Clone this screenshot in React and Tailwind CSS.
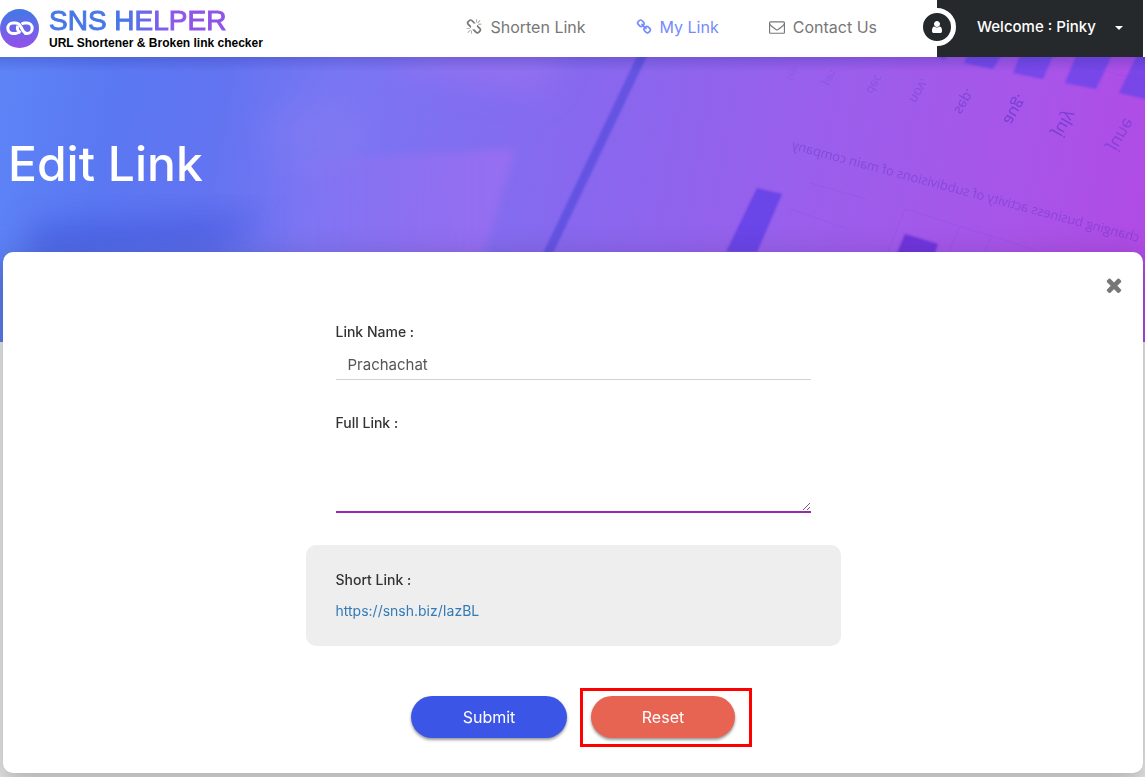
import { useState } from 'react';

const ICONS = {
  broken:
    'M503 1271l-256 256q-10 9-23 9-12 0-23-9-9-10-9-23t9-23l256-256q10-9 23-9t23 9q9 10 9 23t-9 23zm169 41v320q0 14-9 23t-23 9-23-9-9-23v-320q0-14 9-23t23-9 23 9 9 23zm-224-224q0 14-9 23t-23 9h-320q-14 0-23-9t-9-23 9-23 23-9h320q14 0 23 9t9 23zm1264 128q0 120-85 203l-147 146q-83 83-203 83-121 0-204-85l-334-335q-21-21-42-56l239-18 273 274q28 28 68 27.5t68-27.5l147-146q28-28 28-67 0-40-28-68l-274-275 18-239q35 21 56 42l336 336q84 86 84 204zm-617-724l-239 18-273-274q-28-28-68-28-39 0-68 27l-147 146q-28 28-28 67 0 40 28 68l274 274-18 240q-35-21-56-42l-336-336q-84-86-84-204 0-120 85-203l147-146q83-83 203-83 121 0 204 85l334 335q21 21 42 56zm633 84q0 14-9 23t-23 9h-320q-14 0-23-9t-9-23 9-23 23-9h320q14 0 23 9t9 23zm-544-544v320q0 14-9 23t-23 9-23-9-9-23v-320q0-14 9-23t23-9 23 9 9 23zm407 151l-256 256q-11 9-23 9t-23-9q-9-10-9-23t9-23l256-256q10-9 23-9t23 9q9 10 9 23t-9 23z',
  chain:
    'M1520 1216q0-40-28-68l-208-208q-28-28-68-28-42 0-72 32 3 3 19 18.5t21.5 21.5 15 19 13 25.5 3.5 27.5q0 40-28 68t-68 28q-15 0-27.5-3.5t-25.5-13-19-15-21.5-21.5-18.5-19q-33 31-33 73 0 40 28 68l206 207q27 27 68 27 40 0 68-26l147-146q28-28 28-67zm-703-705q0-40-28-68l-206-207q-28-28-68-28-39 0-68 27l-147 146q-28 28-28 67 0 40 28 68l208 208q27 27 68 27 42 0 72-31-3-3-19-18.5t-21.5-21.5-15-19-13-25.5-3.5-27.5q0-40 28-68t68-28q15 0 27.5 3.5t25.5 13 19 15 21.5 21.5 18.5 19q33-31 33-73zm895 705q0 120-85 203l-147 146q-83 83-203 83-121 0-204-85l-206-207q-83-83-83-203 0-123 88-209l-88-88q-86 88-208 88-120 0-204-84l-208-208q-84-84-84-204t85-203l147-146q83-83 203-83 121 0 204 85l206 207q83 83 83 203 0 123-88 209l88 88q86-88 208-88 120 0 204 84l208 208q84 84 84 204z',
  envelope:
    'M1664 1504v-768q-32 36-69 66-268 206-426 338-51 43-83 67t-86.5 48.5-102.5 24.5h-2q-48 0-102.5-24.5t-86.5-48.5-83-67q-158-132-426-338-37-30-69-66v768q0 13 9.5 22.5t22.5 9.5h1472q13 0 22.5-9.5t9.5-22.5zm0-1051v-24.5l-.5-13-3-12.5-5.5-9-9-7.5-14-2.5h-1472q-13 0-22.5 9.5t-9.5 22.5q0 168 147 284 193 152 401 317 6 5 35 29.5t46 37.5 44.5 31.5 50.5 27.5 43 9h2q20 0 43-9t50.5-27.5 44.5-31.5 46-37.5 35-29.5q208-165 401-317 54-43 100.5-115.5t46.5-131.5zm128-37v1088q0 66-47 113t-113 47h-1472q-66 0-113-47t-47-113v-1088q0-66 47-113t113-47h1472q66 0 113 47t47 113z',
  user:
    'M1536 1399q0 109-62.5 187t-150.5 78h-854q-88 0-150.5-78t-62.5-187q0-85 8.5-160.5t31.5-152 58.5-131 94-89 134.5-34.5q131 128 313 128t313-128q76 0 134.5 34.5t94 89 58.5 131 31.5 152 8.5 160.5zm-256-887q0 159-112.5 271.5t-271.5 112.5-271.5-112.5-112.5-271.5 112.5-271.5 271.5-112.5 271.5 112.5 112.5 271.5z',
  times:
    'M1490 1322q0 40-28 68l-136 136q-28 28-68 28t-68-28l-294-294-294 294q-28 28-68 28t-68-28l-136-136q-28-28-28-68t28-68l294-294-294-294q-28-28-28-68t28-68l136-136q28-28 68-28t68 28l294 294 294-294q28-28 68-28t68 28l136 136q28 28 28 68t-28 68l-294 294 294 294q28 28 28 68z',
};

const NAV = [
  { label: 'Shorten Link', icon: 'broken' },
  { label: 'My Link', icon: 'chain', active: true },
  { label: 'Contact Us', icon: 'envelope' },
];

const MONTHS = [
  { text: 'june', x: 1108, y: 90, size: 17, opacity: 0.45 },
  { text: 'july', x: 1053, y: 76, size: 17, opacity: 0.6 },
  { text: 'aug.', x: 1003, y: 64, size: 16, opacity: 0.65 },
  { text: 'sep.', x: 954, y: 54, size: 14, opacity: 0.5 },
  { text: 'nov.', x: 909, y: 43, size: 13, opacity: 0.35 },
  { text: 'dec', x: 866, y: 34, size: 12, opacity: 0.25 },
  { text: 'jan', x: 823, y: 26, size: 11, opacity: 0.2 },
  { text: 'feb', x: 786, y: 21, size: 10, opacity: 0.12 },
];

function Icon({ name, className = '' }) {
  return (
    <svg viewBox="0 0 1792 1792" fill="currentColor" aria-hidden="true" className={`shrink-0 ${className}`}>
      <path d={ICONS[name]} />
    </svg>
  );
}

function Logo() {
  return (
    <a href="#home" className="flex items-start gap-[10px] pt-[7px]">
      <svg viewBox="0 0 39 39" aria-hidden="true" className="mt-[2px] h-[39px] w-[39px] shrink-0">
        <defs>
          <linearGradient id="logoFill" x1="0" y1="0" x2="0" y2="1">
            <stop offset="0.1" stopColor="#4776e6" />
            <stop offset="0.9" stopColor="#8e54e9" />
          </linearGradient>
        </defs>
        <circle cx="19.5" cy="19.5" r="19.5" fill="url(#logoFill)" />
        {/* two interlocked links, each passing once over the other */}
        <g fill="none" stroke="#fff" strokeWidth="3">
          <path d="M18.8 23.2 A5.4 5.4 0 0 1 15.6 24.4 H13 A5.2 5.2 0 0 1 13 14 H15.6 C19 14 20.4 16.4 21.6 19.2 C22.8 22 24 24.4 27 24.4" />
          <path d="M21.6 15.2 A5.4 5.4 0 0 1 24.4 14 H27 A5.2 5.2 0 0 1 27 24.4 H24.4" />
          <path d="M17.8 16.8 C16.8 19.6 18.2 22.4 20.6 23.8" />
        </g>
      </svg>
      <span className="flex flex-col whitespace-nowrap font-['Liberation_Sans',Arial,sans-serif]">
        <span className="bg-linear-to-r from-[#4776e6] from-35% to-[#8e54e9] to-60% bg-clip-text text-[28px] leading-7 text-transparent [-webkit-text-stroke:1px_transparent]">
          SNS HELPER
        </span>
        <span className="text-xs leading-4 font-bold text-black">URL Shortener &amp; Broken link checker</span>
      </span>
    </a>
  );
}

function Header() {
  return (
    <header className="flex h-[57px] bg-white pr-[2px]">
      <Logo />
      <nav className="mr-[60px] ml-auto flex items-center gap-[50px] pb-1">
        {NAV.map((item) => (
          <a
            key={item.label}
            href="#nav"
            className={`flex items-center gap-2 text-base whitespace-nowrap ${
              item.active ? 'text-[#758bfd]' : 'text-[#777777]'
            }`}
          >
            <Icon name={item.icon} className="h-4 w-4" />
            {item.label}
          </a>
        ))}
      </nav>
      <button
        type="button"
        className="relative flex w-[206px] shrink-0 items-center justify-between bg-[#25292c] pr-5 pb-[2px] pl-10 text-[15px] font-medium whitespace-nowrap text-white"
      >
        <span className="absolute top-2 -left-[19px] flex h-[38px] w-[38px] items-center justify-center rounded-full border-5 border-white bg-[#25292c]">
          <Icon name="user" className="h-[14px] w-[14px]" />
        </span>
        Welcome : Pinky
        <span className="border-x-4 border-t-4 border-x-transparent border-t-white" />
      </button>
    </header>
  );
}

function HeroArt() {
  return (
    <svg
      viewBox="0 0 1145 285"
      preserveAspectRatio="xMidYMid slice"
      aria-hidden="true"
      className="absolute inset-0 h-full w-full"
    >
      <defs>
        <linearGradient id="heroBase" gradientUnits="userSpaceOnUse" x1="0" y1="0" x2="1145" y2="200">
          <stop offset="0" stopColor="#5e84f7" />
          <stop offset="0.1" stopColor="#5a78f2" />
          <stop offset="0.19" stopColor="#6274f1" />
          <stop offset="0.29" stopColor="#7976f3" />
          <stop offset="0.5" stopColor="#8768ee" />
          <stop offset="0.7" stopColor="#9a5fec" />
          <stop offset="0.88" stopColor="#a855e9" />
          <stop offset="1" stopColor="#b04be5" />
        </linearGradient>
        <linearGradient id="heroTop" x1="0" y1="0" x2="0" y2="1">
          <stop offset="0" stopColor="#2b2f9c" stopOpacity="0.25" />
          <stop offset="1" stopColor="#2b2f9c" stopOpacity="0" />
        </linearGradient>
        <linearGradient id="panel" x1="0" y1="0" x2="1" y2="0">
          <stop offset="0" stopColor="#9c6ff2" stopOpacity="0" />
          <stop offset="1" stopColor="#9c6ff2" stopOpacity="0.8" />
        </linearGradient>
        <filter id="soft" x="-50%" y="-50%" width="200%" height="200%">
          <feGaussianBlur stdDeviation="16" />
        </filter>
        <filter id="edge" x="-20%" y="-20%" width="140%" height="140%">
          <feGaussianBlur stdDeviation="4" />
        </filter>
        <filter id="fine" x="-20%" y="-20%" width="140%" height="140%">
          <feGaussianBlur stdDeviation="1" />
        </filter>
      </defs>
      <rect width="1145" height="285" fill="url(#heroBase)" />

      {/* out of focus desk */}
      <path d="M30 168 L270 158 L220 188 L30 200 Z" fill="#3f52d8" opacity="0.65" filter="url(#soft)" />
      <ellipse cx="315" cy="78" rx="55" ry="34" fill="#9080f2" opacity="0.3" filter="url(#soft)" />
      <path d="M400 -20 L570 -20 L540 38 L400 10 Z" fill="#a274f0" opacity="0.5" filter="url(#soft)" />
      <path d="M270 105 L515 92 L480 210 L250 210 Z" fill="url(#panel)" filter="url(#edge)" />

      {/* paper edge */}
      <path d="M644 -5 L530 234" stroke="#5c4fe0" strokeWidth="9" opacity="0.8" filter="url(#fine)" />

      {/* chart bars */}
      <g fill="#6b45e8" filter="url(#fine)">
        <path d="M757 131 L782 137 L757 195 L726 195 Z" />
        <path d="M905 177 L938 187 L925 225 L885 225 Z" fill="#6f36dc" />
        <path d="M932 -4 L950 -4 L944 3 Z" opacity="0.8" />
        <path d="M968 -4 L1003 -4 L993 12 L964 6 Z" opacity="0.8" />
        <path d="M1021 -4 L1054 -4 L1043 22 L1013 16 Z" opacity="0.8" />
        <path d="M1077 -4 L1113 -4 L1096 32 L1065 26 Z" opacity="0.8" />
        <path d="M1138 -4 L1150 -4 L1150 43 L1119 36 Z" opacity="0.8" />
      </g>
      <g fill="none" stroke="#7c3fd6" opacity="0.15">
        <path d="M1050 0 L1145 24" />
        <path d="M810 126 L866 142 M790 152 L848 172" />
        <path d="M888 195 L905 152 L1036 193 M960 170 L948 196 M992 180 L984 196" />
      </g>

      {/* the photographed sheet is mirrored */}
      <g fill="#5b2fc4" className="font-['Open_Sans',sans-serif]">
        {MONTHS.map((m) => (
          <text
            key={m.text}
            transform={`translate(${m.x} ${m.y}) scale(-1 1) rotate(-120)`}
            fontSize={m.size}
            opacity={m.opacity}
          >
            {m.text}
          </text>
        ))}
        <text transform="translate(1138 185) scale(-1 1) rotate(-15)" fontSize="13" opacity="0.4">
          changing business activity of subdivisions of main company
        </text>
      </g>
      <rect width="1145" height="14" fill="url(#heroTop)" />
    </svg>
  );
}

export default function App() {
  const [name, setName] = useState('Prachachat');
  const [fullLink, setFullLink] = useState('');

  const handleReset = () => {
    setName('');
    setFullLink('');
  };

  return (
    <div className="min-h-screen bg-[#eeeeee] font-['Inter',sans-serif] text-[#333333]">
      <Header />

      <section className="relative h-[285px] overflow-hidden bg-[#8768ee]">
        <HeroArt />
        <h1 className="relative pt-[75px] pl-2 text-5xl leading-16 font-medium text-white">Edit Link</h1>
      </section>

      <main className="relative mr-[2px] -mt-[90px] ml-[3px] rounded-[10px] bg-white px-4 pt-[70px] pb-[35px] shadow-[0_16px_24px_2px_rgba(0,0,0,0.14),0_6px_30px_5px_rgba(0,0,0,0.12)]">
        <button type="button" aria-label="Close" className="absolute top-[22px] right-[18px] text-[#777777]">
          <Icon name="times" className="h-[22px] w-[22px]" />
        </button>

        <form className="mx-auto max-w-[535px]" onSubmit={(e) => e.preventDefault()}>
          <div className="flex flex-col px-[30px] text-sm">
            <label htmlFor="link-name" className="leading-5 font-medium">
              Link Name :
            </label>
            <input
              id="link-name"
              type="text"
              value={name}
              onChange={(e) => setName(e.target.value)}
              className="mt-2 h-[30px] border-b border-[#d2d2d2] px-3 text-[15px] text-[#555555] outline-none"
            />
            <label htmlFor="full-link" className="mt-[33px] leading-5 font-medium">
              Full Link :
            </label>
            <textarea
              id="full-link"
              value={fullLink}
              onChange={(e) => setFullLink(e.target.value)}
              className="h-20 resize border-b-2 border-[#9c27b0] px-3 py-2 text-[15px] text-[#555555] outline-none"
            />
          </div>

          <div className="mt-8 rounded-[10px] bg-[#eeeeee] px-[30px] py-[25px] text-sm leading-5">
            <p className="font-medium">Short Link :</p>
            <a href="#short" className="mt-[11px] block text-[#337ab7]">
              https://snsh.biz/IazBL
            </a>
          </div>

          <div className="mt-[50px] flex justify-center gap-6">
            <button
              type="submit"
              className="h-[42px] w-[156px] rounded-full bg-[#3b55e6] text-base text-white shadow-[0_2px_3px_rgba(0,0,0,0.4)]"
            >
              Submit
            </button>
            <div className="relative">
              <button
                type="button"
                onClick={handleReset}
                className="h-[42px] w-36 rounded-full bg-[#e76352] text-base text-white shadow-[0_2px_3px_rgba(0,0,0,0.4)]"
              >
                Reset
              </button>
              <span className="pointer-events-none absolute -top-2 -right-[17px] -bottom-[9px] -left-[11px] border-3 border-[#ff0000]" />
            </div>
          </div>
        </form>
      </main>
    </div>
  );
}
